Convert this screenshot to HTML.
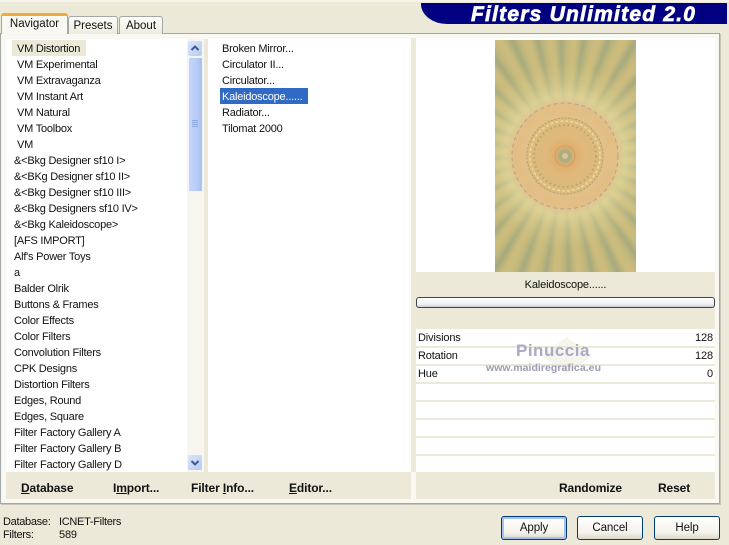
<!DOCTYPE html>
<html><head><meta charset="utf-8"><style>
html,body{margin:0;padding:0}
body{width:729px;height:545px;position:relative;overflow:hidden;background:#ece9d8;font:11px/14px "Liberation Sans",sans-serif;color:#111}
div{position:absolute;white-space:nowrap}
.l{height:14px;letter-spacing:-.22px;margin-top:1px}
.b{font-weight:bold;font-size:12px;top:481px;color:#111;letter-spacing:-.12px}
.btn{top:516px;width:64px;height:22px;border:1px solid #003c74;border-radius:3px;background:linear-gradient(#fff,#f4f3ec 70%,#dcd8c8);text-align:center;font-size:11.5px;line-height:23px;letter-spacing:-.1px}
.sep{left:416px;width:299px;height:2px;background:#ece9d8}
.v{right:16px;text-align:right;letter-spacing:-.1px}
.t{letter-spacing:-.15px}
</style></head><body>
<div style="left:0;top:0;width:729px;height:2px;background:#f6f4ea"></div>
<div style="left:421px;top:3px;width:306px;height:21px;background:#000080;border-bottom-left-radius:26px 20px"></div>
<div style="left:471px;top:3px;font:italic bold 21px/23px 'Liberation Sans',sans-serif;color:#fff;letter-spacing:1.22px;-webkit-text-stroke:.7px #fff">Filters Unlimited 2.0</div>

<div style="left:0;top:33px;width:718px;height:469px;border:1px solid #a2a8a8;background:#f9f8f3;box-shadow:1px 1px 0 #c4c4b8"></div>
<div style="left:68px;top:16px;width:48px;height:17px;border:1px solid #a2a8a8;border-bottom:0;border-radius:3px 3px 0 0;background:linear-gradient(#fdfdfa,#eeebdf);text-align:center;font-size:11.5px;line-height:18px">Presets</div>
<div style="left:119px;top:16px;width:42px;height:17px;border:1px solid #a2a8a8;border-bottom:0;border-radius:3px 3px 0 0;background:linear-gradient(#fdfdfa,#eeebdf);text-align:center;font-size:11.5px;line-height:18px">About</div>
<div style="left:1px;top:13px;width:67px;height:21px;border:1px solid #a2a8a8;border-top:3px solid #f0a93a;border-bottom:0;border-radius:3px 3px 0 0;background:#f9f8f3;text-align:center;font-size:11.5px;line-height:17px;box-sizing:border-box">Navigator</div>

<div style="left:6px;top:39px;width:181px;height:433px;background:#fff"></div>
<div style="left:12px;top:40px;width:74px;height:16px;background:#ece9d8"></div>
<div class="l" style="left:17px;top:41px">VM Distortion</div>
<div class="l" style="left:17px;top:57px">VM Experimental</div>
<div class="l" style="left:17px;top:73px">VM Extravaganza</div>
<div class="l" style="left:17px;top:89px">VM Instant Art</div>
<div class="l" style="left:17px;top:105px">VM Natural</div>
<div class="l" style="left:17px;top:121px">VM Toolbox</div>
<div class="l" style="left:17px;top:137px">VM</div>
<div class="l" style="left:14px;top:153px">&amp;&lt;Bkg Designer sf10 I&gt;</div>
<div class="l" style="left:14px;top:169px">&amp;&lt;BKg Designer sf10 II&gt;</div>
<div class="l" style="left:14px;top:185px">&amp;&lt;Bkg Designer sf10 III&gt;</div>
<div class="l" style="left:14px;top:201px">&amp;&lt;Bkg Designers sf10 IV&gt;</div>
<div class="l" style="left:14px;top:217px">&amp;&lt;Bkg Kaleidoscope&gt;</div>
<div class="l" style="left:14px;top:233px">[AFS IMPORT]</div>
<div class="l" style="left:14px;top:249px">Alf's Power Toys</div>
<div class="l" style="left:14px;top:265px">a</div>
<div class="l" style="left:14px;top:281px">Balder Olrik</div>
<div class="l" style="left:14px;top:297px">Buttons &amp; Frames</div>
<div class="l" style="left:14px;top:313px">Color Effects</div>
<div class="l" style="left:14px;top:329px">Color Filters</div>
<div class="l" style="left:14px;top:345px">Convolution Filters</div>
<div class="l" style="left:14px;top:361px">CPK Designs</div>
<div class="l" style="left:14px;top:377px">Distortion Filters</div>
<div class="l" style="left:14px;top:393px">Edges, Round</div>
<div class="l" style="left:14px;top:409px">Edges, Square</div>
<div class="l" style="left:14px;top:425px">Filter Factory Gallery A</div>
<div class="l" style="left:14px;top:441px">Filter Factory Gallery B</div>
<div class="l" style="left:14px;top:457px">Filter Factory Gallery D</div>

<div style="left:187px;top:39px;width:16px;height:433px;background:#f6f5ef"></div>
<div style="left:188px;top:41px;width:14px;height:15px;background:linear-gradient(135deg,#dbe6fb,#b7caf3);border-radius:2px"></div>
<svg style="position:absolute;left:188px;top:41px" width="14" height="15"><path d="M3.5 9 L7 5.5 L10.5 9" fill="none" stroke="#3f5a92" stroke-width="2"/></svg>
<div style="left:188px;top:57px;width:13px;height:133px;background:linear-gradient(90deg,#c6d6f8,#b5cbf7 60%,#a9c0f0);border:1px solid #eef3fd;border-radius:2px"></div>
<svg style="position:absolute;left:191px;top:119px" width="8" height="9"><path d="M1 1.5H7M1 3.5H7M1 5.5H7M1 7.5H7" stroke="#8ea7dc" stroke-width="1"/></svg>
<div style="left:188px;top:455px;width:14px;height:15px;background:linear-gradient(135deg,#dbe6fb,#b7caf3);border-radius:2px"></div>
<svg style="position:absolute;left:188px;top:455px" width="14" height="15"><path d="M3.5 6 L7 9.5 L10.5 6" fill="none" stroke="#3f5a92" stroke-width="2"/></svg>

<div style="left:204px;top:39px;width:4px;height:433px;background:#ece9d8"></div>
<div style="left:208px;top:39px;width:203px;height:433px;background:#fff"></div>
<div style="left:220px;top:88px;width:88px;height:16px;background:#316ac5"></div>
<div class="l" style="left:222px;top:41px">Broken Mirror...</div>
<div class="l" style="left:222px;top:57px">Circulator II...</div>
<div class="l" style="left:222px;top:73px">Circulator...</div>
<div class="l" style="left:222px;top:89px;color:#fff">Kaleidoscope......</div>
<div class="l" style="left:222px;top:105px">Radiator...</div>
<div class="l" style="left:222px;top:121px">Tilomat 2000</div>
<div style="left:411px;top:38px;width:5px;height:434px;background:#ece9d8"></div>

<div style="left:416px;top:38px;width:299px;height:234px;background:#fff"></div>
<div style="left:495px;top:40px;width:141px;height:232px;overflow:hidden;background:
radial-gradient(circle at 70px 116px,#aba87c 0,#b2ad80 6px,#dcb276 9px,#e0b070 12px,#e0b97c 20px,#dcb97c 36px,#e2c088 40px,#e2bd84 51px,rgba(224,200,145,.95) 54px,rgba(226,216,155,.75) 60px,rgba(220,210,148,.45) 72px,rgba(205,192,125,.12) 92px,rgba(200,185,120,0) 110px),
repeating-conic-gradient(from -2deg at 70px 116px,#a6a97f 0deg,#bdb57b 2.5deg,#cbbb7d 5deg,#cbbb7d 7.5deg,#bdb57b 9deg,#a6a97f 11.25deg)">
<svg width="141" height="232" style="position:absolute;left:0;top:0">
<g fill="none" transform="translate(70 116)">
<circle r="53" stroke="#b5a08c" stroke-width="1" stroke-dasharray="4 3"/>
<circle r="38" stroke="#a39a6c" stroke-width=".8" stroke-dasharray="2 1.5"/>
<circle r="35" stroke="#ecd99c" stroke-width="1.6" stroke-dasharray="3 2"/>
<circle r="31" stroke="#b5a56c" stroke-width="2" stroke-dasharray="1.5 3"/>
<circle r="10" stroke="#d99e5c" stroke-width="1.3"/>
<circle r="3" fill="#d0c898" stroke="none"/>
</g></svg></div>

<div style="left:416px;top:272px;width:299px;height:57px;background:#ece9d8"></div>
<div class="t" style="left:416px;top:278px;width:299px;text-align:center">Kaleidoscope......</div>
<div style="left:416px;top:297px;width:297px;height:9px;border:1px solid #444;border-radius:3px;background:linear-gradient(#fff,#eef0f4 70%,#c9ccd6)"></div>
<div style="left:416px;top:329px;width:299px;height:143px;background:#fff"></div>
<div class="sep" style="top:346px"></div><div class="sep" style="top:364px"></div><div class="sep" style="top:382px"></div><div class="sep" style="top:400px"></div><div class="sep" style="top:418px"></div><div class="sep" style="top:436px"></div><div class="sep" style="top:454px"></div>
<svg style="position:absolute;left:540px;top:336px" width="54" height="40"><path d="M27 1 L52 20 L27 38 L2 20Z" fill="#ece9d8" opacity=".45"/></svg>
<div class="t" style="left:418px;top:331px">Divisions</div><div class="v" style="top:331px">128</div>
<div class="t" style="left:418px;top:349px">Rotation</div><div class="v" style="top:349px">128</div>
<div class="t" style="left:418px;top:367px">Hue</div><div class="v" style="top:367px">0</div>
<div style="left:516px;top:341px;font:bold 17px/20px 'Liberation Sans',sans-serif;color:#a9a9c4;letter-spacing:.5px">Pinuccia</div>
<div style="left:486px;top:361px;font:bold 10.5px/14px 'Liberation Sans',sans-serif;color:#9c9cb4;letter-spacing:.05px">www.maidiregrafica.eu</div>

<div style="left:6px;top:472px;width:405px;height:27px;background:#ece9d8"></div>
<div style="left:416px;top:472px;width:299px;height:27px;background:#ece9d8"></div>
<div class="b" style="left:21px"><u>D</u>atabase</div>
<div class="b" style="left:113px">I<u>m</u>port...</div>
<div class="b" style="left:191px">Filter <u>I</u>nfo...</div>
<div class="b" style="left:289px"><u>E</u>ditor...</div>
<div class="b" style="left:559px">Randomize</div>
<div class="b" style="left:658px">Reset</div>

<div class="t" style="left:3px;top:515px;letter-spacing:-.3px">Database:</div><div class="t" style="left:59px;top:515px;letter-spacing:-.3px">ICNET-Filters</div>
<div class="t" style="left:3px;top:528px;letter-spacing:-.3px">Filters:</div><div class="t" style="left:59px;top:528px">589</div>
<div class="btn" style="left:501px;box-shadow:inset 0 0 0 2px #a8c0ee">Apply</div>
<div class="btn" style="left:577px">Cancel</div>
<div class="btn" style="left:654px">Help</div>
</body></html>
